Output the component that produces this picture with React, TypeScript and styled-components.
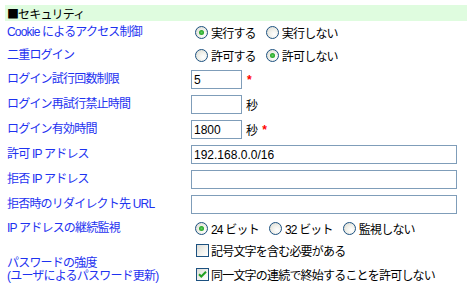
import React from 'react';
import styled, { createGlobalStyle } from 'styled-components';

const Global = createGlobalStyle`
    body {
        margin: 0;
        background: #ffffff;
        font-family: "Liberation Sans", "Noto Sans CJK JP", sans-serif;
        font-size: 12px;
        color: #000;
    }
`;

const Page = styled.div`
    padding: 5px 0 0 5px;
    width: 462px;
`;

const Header = styled.div`
    height: 16px;
    background: #dffcdf;
    display: flex;
    align-items: center;
    padding-left: 2px;
    letter-spacing: -0.8px;
`;

const Mark = styled.span`
    font-family: "Noto Sans CJK JP", sans-serif;
    letter-spacing: -1px;
`;

const Row = styled.div<{ $h: number }>`
    display: grid;
    grid-template-columns: 186px 1fr;
    height: ${p => p.$h}px;
    align-items: center;
`;

const Label = styled.div`
    color: #1e32f0;
    padding-left: 2px;
    letter-spacing: -0.8px;
    line-height: 13px;
`;

const BottomLabel = styled(Label)`
    align-self: end;
    padding-bottom: 1px;
`;

const Cell = styled.div`
    display: flex;
    align-items: center;
    letter-spacing: -0.8px;
`;

const Stack = styled.div`
    display: flex;
    flex-direction: column;
    gap: 7px;
    letter-spacing: -0.8px;
`;

const TextBox = styled.div<{ $w: number }>`
    width: ${p => p.$w}px;
    height: 19px;
    box-sizing: border-box;
    border: 1px solid #7f9db9;
    padding: 0 2px;
    display: flex;
    align-items: center;
    font-size: 12px;
    letter-spacing: 0;
    background: #fff;
`;

const Unit = styled.span`
    margin-left: 4px;
`;

const Star = styled.span`
    color: #ff0000;
    margin-left: 5px;
    font-weight: bold;
`;

const Choice = styled.label`
    display: inline-flex;
    align-items: center;
    margin-right: 10px;
    &:first-child {
        margin-left: 4px;
    }
`;

const Dot = styled.span<{ $on?: boolean }>`
    width: 13px;
    height: 13px;
    box-sizing: border-box;
    border-radius: 50%;
    border: 1px solid #1c5180;
    background: radial-gradient(circle at 65% 65%, #ffffff 0%, #f0f0ea 45%, #d6d6ce 100%);
    margin-right: 3px;
    position: relative;
    &::after {
        content: '';
        display: ${p => (p.$on ? 'block' : 'none')};
        position: absolute;
        left: 3px;
        top: 3px;
        width: 5px;
        height: 5px;
        border-radius: 50%;
        background: radial-gradient(circle, #60d060 0%, #21a121 70%);
    }
`;

const CheckRow = styled.div`
    display: flex;
    align-items: center;
    padding-left: 5px;
`;

const Box = styled.span`
    width: 13px;
    height: 13px;
    box-sizing: border-box;
    border: 1px solid #1c5180;
    background: linear-gradient(135deg, #dcdcd7 0%, #f4f4f0 60%, #ffffff 100%);
    margin-right: 2px;
    display: flex;
    align-items: center;
    justify-content: center;
`;

const Radio = ({ on, text }: { on?: boolean; text: string }) => (
    <Choice>
        <Dot $on={on} />
        {text}
    </Choice>
);

const Check = ({ on, text }: { on?: boolean; text: string }) => (
    <CheckRow>
        <Box>
            {on && (
                <svg width="9" height="9" viewBox="0 0 9 9">
                    <path d="M1 4.2 L3.3 6.5 L8 1.8" stroke="#21a121" strokeWidth="2" fill="none" />
                </svg>
            )}
        </Box>
        {text}
    </CheckRow>
);

export default function App() {
    return (
        <>
            <Global />
            <Page>
                <Header>
                    <Mark>■</Mark>セキュリティ
                </Header>
                <Row $h={22}>
                    <Label>Cookie によるアクセス制御</Label>
                    <Cell>
                        <Radio on text="実行する" />
                        <Radio text="実行しない" />
                    </Cell>
                </Row>
                <Row $h={24}>
                    <Label>二重ログイン</Label>
                    <Cell>
                        <Radio text="許可する" />
                        <Radio on text="許可しない" />
                    </Cell>
                </Row>
                <Row $h={25}>
                    <Label>ログイン試行回数制限</Label>
                    <Cell>
                        <TextBox $w={51}>5</TextBox>
                        <Star>*</Star>
                    </Cell>
                </Row>
                <Row $h={25}>
                    <Label>ログイン再試行禁止時間</Label>
                    <Cell>
                        <TextBox $w={51} />
                        <Unit>秒</Unit>
                    </Cell>
                </Row>
                <Row $h={25}>
                    <Label>ログイン有効時間</Label>
                    <Cell>
                        <TextBox $w={51}>1800</TextBox>
                        <Unit>秒</Unit>
                        <Star>*</Star>
                    </Cell>
                </Row>
                <Row $h={25}>
                    <Label>許可 IP アドレス</Label>
                    <Cell>
                        <TextBox $w={266}>192.168.0.0/16</TextBox>
                    </Cell>
                </Row>
                <Row $h={25}>
                    <Label>拒否 IP アドレス</Label>
                    <Cell>
                        <TextBox $w={266} />
                    </Cell>
                </Row>
                <Row $h={25}>
                    <Label>拒否時のリダイレクト先 URL</Label>
                    <Cell>
                        <TextBox $w={266} />
                    </Cell>
                </Row>
                <Row $h={23}>
                    <Label>IP アドレスの継続監視</Label>
                    <Cell>
                        <Radio on text="24 ビット" />
                        <Radio text="32 ビット" />
                        <Radio text="監視しない" />
                    </Cell>
                </Row>
                <Row $h={44}>
                    <BottomLabel>
                        パスワードの強度
                        <br />
                        (ユーザによるパスワード更新)
                    </BottomLabel>
                    <Stack>
                        <Check text="記号文字を含む必要がある" />
                        <Check on text="同一文字の連続で終始することを許可しない" />
                    </Stack>
                </Row>
            </Page>
        </>
    );
}
